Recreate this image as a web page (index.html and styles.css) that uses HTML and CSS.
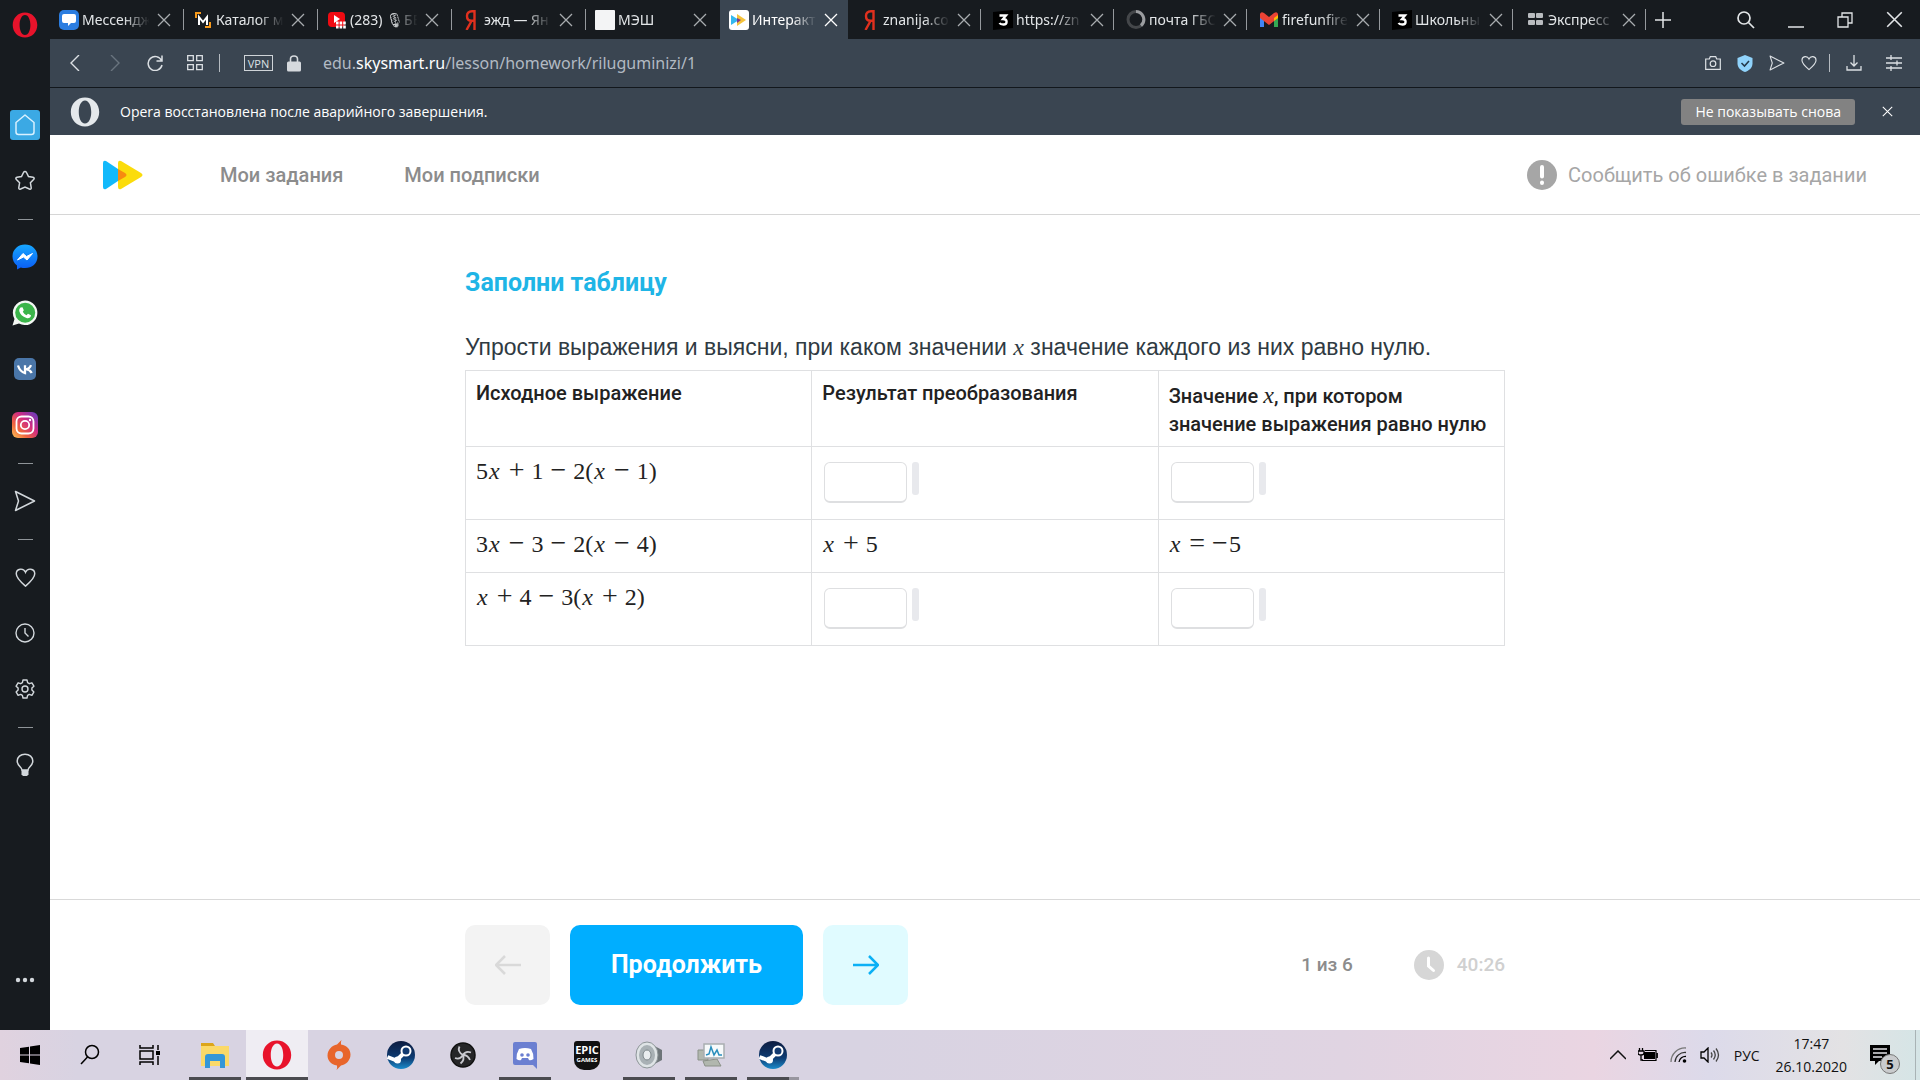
FILE: index.html
```html
<!DOCTYPE html>
<html lang="ru">
<head>
<meta charset="utf-8">
<title>Интерактивная тетрадь</title>
<link rel="stylesheet" href="styles.css">
</head>
<body>
<svg class="sprite" aria-hidden="true">
  <defs>
    <linearGradient id="g-red" x1="0" y1="0" x2="1" y2="1"><stop offset="0" stop-color="#ff2a45"/><stop offset="1" stop-color="#a5061c"/></linearGradient>
    <linearGradient id="g-msg" x1="0" y1="0" x2="0" y2="1"><stop offset="0" stop-color="#17a7ff"/><stop offset="1" stop-color="#0a5cf5"/></linearGradient>
    <linearGradient id="g-insta" x1="0" y1="1" x2="1" y2="0"><stop offset="0" stop-color="#fcc658"/><stop offset=".3" stop-color="#f0663f"/><stop offset=".6" stop-color="#cf2b83"/><stop offset="1" stop-color="#5b3fc4"/></linearGradient>
    <linearGradient id="g-steam" x1="0" y1="0" x2="0" y2="1"><stop offset="0" stop-color="#0d1c40"/><stop offset=".6" stop-color="#0d3b72"/><stop offset="1" stop-color="#1b8ccb"/></linearGradient>
    <symbol id="x" viewBox="0 0 14 14"><path d="M1 1l12 12M13 1L1 13" fill="none" stroke="currentColor" stroke-width="1.3"/></symbol>
    <symbol id="opera" viewBox="0 0 26 26"><path fill-rule="evenodd" d="M13 .5c7 0 12.300 5.500 12.300 12.500s-5.300 12.500-12.300 12.500S.7 20 .7 13 6 .5 13 .5zm0 2.500C9.500 3 7.600 8 7.600 13s1.900 10 5.400 10 5.400-5 5.400-10S16.500 3 13 3z" fill="currentColor"/></symbol>
    <symbol id="ya" viewBox="0 0 20 20"><path d="M13.500 0v20M13.500 1.200h-2.500C7.500 1.200 6 3.200 6 6s1.500 4.800 4.500 4.800h3M10.500 11L5.500 20" fill="none" stroke="#e0301e" stroke-width="2.400"/></symbol>
    <symbol id="sky" viewBox="0 0 40 30"><path d="M0 3Q0 0 3 1l12 8v12L3 29Q0 30 0 27z" fill="#12b9fb"/><path d="M15 3q0-3 3-2l20 12q3 2 0 4L18 29q-3 1-3-2z" fill="#fbdc0b"/><path d="M15 9l7 4q3 2 0 4l-7 4z" fill="#f78a10"/></symbol>
    <symbol id="heart" viewBox="0 0 20 20"><path d="M10 18.200C5 14 1.200 10.500 1.200 6.500c0-5.500 7-5.800 8.800-1.500 1.800-4.300 8.800-4 8.800 1.500 0 4-3.800 7.500-8.800 11.700z" fill="none" stroke="currentColor" stroke-width="1.400"/></symbol>
    <symbol id="send" viewBox="0 0 22 22"><path d="M1.500 1.500L20.500 11l-19 9.500 3-9.500z" fill="none" stroke="currentColor" stroke-width="1.500" stroke-linejoin="round"/></symbol>
    <symbol id="steam" viewBox="0 0 30 30"><circle cx="15" cy="15" r="14" fill="url(#g-steam)"/><path d="M1.500 17l9 3.500 8-8" stroke="#fff" stroke-width="4" fill="none"/><circle cx="20" cy="11" r="4.500" fill="#123a70" stroke="#fff" stroke-width="2"/><circle cx="11.500" cy="20" r="3.500" fill="#fff"/></symbol>
    <symbol id="lens" viewBox="0 0 22 22"><circle cx="13" cy="8" r="6.500" fill="none" stroke="currentColor" stroke-width="1.500"/><path d="M8.500 13L2 20" stroke="currentColor" stroke-width="1.500"/></symbol>
    <symbol id="three" viewBox="0 0 20 20"><path d="M0 2l20-2v18L0 20z" fill="#000"/><path d="M6.500 5.500h6.500L10 9c5 0 4.500 5.500.5 5.500-2 0-3.500-.7-4-1.500" fill="none" stroke="#fff" stroke-width="2.300"/></symbol>
  </defs>
</svg>
<div class="screen">
  <div class="browser">
    <aside class="sidebar">
      <a class="side-logo" href="#" aria-label="Opera"><svg width="26" height="26" class="red"><use href="#opera"/></svg></a>
      <a class="side-item home" href="#" aria-label="Домой"><svg width="30" height="30" viewBox="0 0 30 30"><path d="M6 12.500L15 5l9 7.500V22q0 2.500-2.500 2.500h-13Q6 24.500 6 22z" fill="none" stroke="#d9f1ff" stroke-width="1.500" stroke-linejoin="round"/></svg></a>
      <a class="side-item" href="#" aria-label="Закладки"><svg width="22" height="22" viewBox="0 0 22 22"><path d="M11 1.500q1 0 1.500 1l2 4 4.500.8q2 .5.600 2.200l-3.200 3.300.8 4.700q.2 2.200-1.800 1.500L11 17l-4.400 2q-2 .7-1.800-1.500l.8-4.700L2.400 9.500Q1 7.800 3 7.300l4.500-.8 2-4q.5-1 1.500-1z" fill="none" stroke="currentColor" stroke-width="1.500"/></svg></a>
      <hr>
      <a class="side-item" href="#" aria-label="Messenger"><svg width="26" height="26" viewBox="0 0 26 26"><path d="M13 .5C20 .5 25.500 5.500 25.500 12.500S20 24 13 24c-1.500 0-3-.2-4.200-.6L5 25.500v-4C2 19.500.5 16 .5 12.500.5 5.500 6 .5 13 .5z" fill="url(#g-msg)"/><path d="M5.500 16l5.500-6.500 3.500 3 6-3-5.500 6.500-3.500-3z" fill="#fff" stroke="#fff"/></svg></a>
      <a class="side-item" href="#" aria-label="WhatsApp"><svg width="26" height="26" viewBox="0 0 26 26"><path d="M13 .5a12.300 12.300 0 1 1-6 23L.5 25.500 2.500 19A12.300 12.300 0 0 1 13 .5z" fill="#f4f8f4"/><circle cx="13.200" cy="12.800" r="10" fill="#3bb54a"/><path d="M8.500 7.500l2-.3 1.300 3-1 1.500q1.200 2.300 3.700 3.500l1.500-1.500 3 1.500c0 2.500-2.500 3.500-4.500 2.800-4-1.200-6.500-4-7.300-7q-.3-2.200 1.300-3.500z" fill="#fff"/></svg></a>
      <a class="side-item" href="#" aria-label="ВКонтакте"><svg width="22" height="22" viewBox="0 0 22 22"><rect width="22" height="22" rx="5" fill="#4a76a8"/><path d="M4 7.500q2 6.500 7 7.500V7.200M11.500 11.500q4-.5 5.500-4.300M12 11.200q4 .5 5.700 3.800" stroke="#fff" stroke-width="2.300" fill="none"/></svg></a>
      <a class="side-item" href="#" aria-label="Instagram"><svg width="26" height="26" viewBox="0 0 26 26"><rect width="26" height="26" rx="6" fill="url(#g-insta)"/><rect x="4.500" y="4.500" width="17" height="17" rx="5" fill="none" stroke="#fff" stroke-width="1.800"/><circle cx="13" cy="13" r="4.200" fill="none" stroke="#fff" stroke-width="1.800"/><circle cx="18" cy="8" r="1.200" fill="#fff"/></svg></a>
      <hr>
      <a class="side-item" href="#" aria-label="Моя лента"><svg width="22" height="22"><use href="#send"/></svg></a>
      <hr>
      <a class="side-item" href="#" aria-label="Избранное"><svg width="21" height="21"><use href="#heart"/></svg></a>
      <a class="side-item" href="#" aria-label="История"><svg width="20" height="20" viewBox="0 0 20 20"><g fill="none" stroke="currentColor" stroke-width="1.400"><circle cx="10" cy="10" r="9"/><path d="M10 5v5l3.500 3.500"/></g></svg></a>
      <a class="side-item" href="#" aria-label="Настройки"><svg width="20" height="20" viewBox="0 0 20 20"><g fill="none" stroke="currentColor" stroke-width="1.400" stroke-linejoin="round"><path d="M8 1h4l.6 2.700 1.700 1 2.600-.9 2 3.400-2 1.900v1.900l2 1.900-2 3.400-2.600-.9-1.700 1L12 19H8l-.6-2.600-1.700-1-2.600.9-2-3.400 2-1.900V9.100l-2-1.900 2-3.400 2.600.9 1.700-1z"/><circle cx="10" cy="10" r="3"/></g></svg></a>
      <hr>
      <a class="side-item" href="#" aria-label="Подсказки"><svg width="18" height="24" viewBox="0 0 18 24"><path d="M6 17c0-3-4.800-4-4.800-9C1.200 4 4.500 1.200 9 1.200S16.800 4 16.800 8c0 5-4.800 6-4.800 9z" fill="none" stroke="currentColor" stroke-width="1.500"/><path d="M5.500 17h7v4.500L11 23H7l-1.500-1.500z" fill="currentColor"/></svg></a>
      <a class="side-item side-more" href="#" aria-label="Ещё"><svg width="20" height="6" viewBox="0 0 20 6" fill="currentColor"><circle cx="3" cy="3" r="2.200"/><circle cx="10" cy="3" r="2.200"/><circle cx="17" cy="3" r="2.200"/></svg></a>
    </aside>

    <div class="main">
      <nav class="tabs">
        <div class="tab"><svg viewBox="0 0 20 20"><rect width="20" height="20" rx="5" fill="#2b7de0"/><path d="M5 4h10q2 0 2 2v5q0 2-2 2h-3l-3 3v-3H5q-2 0-2-2V6q0-2 2-2z" fill="#fff"/></svg><span>Мессендж</span><button aria-label="Закрыть"><svg><use href="#x"/></svg></button></div>
        <div class="tab"><svg viewBox="0 0 20 20"><path d="M3 8V3h5M17 12v5h-5" fill="none" stroke="#f79a1c" stroke-width="2"/><path d="M6 15V7l4 5 4-5v8" fill="none" stroke="#fff" stroke-width="2"/></svg><span>Каталог м</span><button aria-label="Закрыть"><svg><use href="#x"/></svg></button></div>
        <div class="tab"><svg viewBox="0 0 20 20"><rect x="1" y="2" width="17" height="15" rx="4" fill="#f00b12"/><path d="M7 5l6 4-6 4z" fill="#fff"/><path d="M9 13h10M9 17h10" stroke="#fff" stroke-width="3" stroke-dasharray="2.600 1"/></svg><span>(283) 🎙БЕ</span><button aria-label="Закрыть"><svg><use href="#x"/></svg></button></div>
        <div class="tab"><svg><use href="#ya"/></svg><span>эжд — Ян</span><button aria-label="Закрыть"><svg><use href="#x"/></svg></button></div>
        <div class="tab"><svg viewBox="0 0 20 20"><rect width="20" height="20" rx="1" fill="#f3f4f5"/></svg><span>МЭШ</span><button aria-label="Закрыть"><svg><use href="#x"/></svg></button></div>
        <div class="tab active"><svg viewBox="0 0 20 20"><rect width="20" height="20" rx="3" fill="#fff"/><path d="M2 5l8 5-8 5z" fill="#35b8ee"/><path d="M8 4l9 6-9 6z" fill="#f5c33b"/><path d="M8 8l4 2-4 3z" fill="#7b3c90"/></svg><span>Интеракт</span><button aria-label="Закрыть"><svg><use href="#x"/></svg></button></div>
        <div class="tab"><svg><use href="#ya"/></svg><span>znanija.co</span><button aria-label="Закрыть"><svg><use href="#x"/></svg></button></div>
        <div class="tab"><svg><use href="#three"/></svg><span>https://zn</span><button aria-label="Закрыть"><svg><use href="#x"/></svg></button></div>
        <div class="tab"><svg viewBox="0 0 20 20"><circle cx="10" cy="9.500" r="8" fill="none" stroke="#44474a" stroke-width="3"/><path d="M10 1.500a8 8 0 0 1 5 14" fill="none" stroke="#9b9da0" stroke-width="3"/></svg><span>почта ГБО</span><button aria-label="Закрыть"><svg><use href="#x"/></svg></button></div>
        <div class="tab"><svg viewBox="0 0 20 20"><path d="M1 17V5l4 3v9z" fill="#4285f4"/><path d="M19 17V5l-4 3v9z" fill="#34a853"/><path d="M1 8V4q1-3 4-1l5 4 5-4q3-2 4 1v4l-9 7z" fill="#ea4335"/><path d="M15 8l4-3v3l-4 3z" fill="#fbbc04"/></svg><span>firefunfire</span><button aria-label="Закрыть"><svg><use href="#x"/></svg></button></div>
        <div class="tab"><svg><use href="#three"/></svg><span>Школьны</span><button aria-label="Закрыть"><svg><use href="#x"/></svg></button></div>
        <div class="tab"><svg viewBox="0 0 20 20" fill="#b9bcbf"><rect x="3" y="3" width="7" height="5" rx="1"/><rect x="11" y="3" width="7" height="5" rx="1"/><rect x="3" y="10" width="7" height="5" rx="1"/><rect x="11" y="10" width="7" height="5" rx="1"/></svg><span>Экспресс</span><button aria-label="Закрыть"><svg><use href="#x"/></svg></button></div>
        <button class="new-tab" aria-label="Новая вкладка"><svg width="16" height="16" viewBox="0 0 16 16"><path d="M8 0v16M0 8h16" stroke="currentColor" stroke-width="1.500"/></svg></button>
        <div class="window-controls">
          <button aria-label="Поиск"><svg width="18" height="18" viewBox="0 0 18 18"><g fill="none" stroke="currentColor" stroke-width="1.700"><circle cx="7" cy="7" r="6"/><path d="M11.500 11.500L17 17"/></g></svg></button>
          <button aria-label="Свернуть"><svg width="16" height="16" viewBox="0 0 16 16"><path d="M0 15h16" stroke="currentColor" stroke-width="1.500"/></svg></button>
          <button aria-label="Развернуть"><svg width="16" height="16" viewBox="0 0 16 16"><path d="M1 5h10v10H1zM5 5V1h10v10h-4" fill="none" stroke="currentColor" stroke-width="1.300"/></svg></button>
          <button aria-label="Закрыть окно"><svg width="17" height="17"><use href="#x"/></svg></button>
        </div>
      </nav>

      <div class="address">
        <button aria-label="Назад"><svg width="16" height="16" viewBox="0 0 16 16"><path d="M12 0L4 8l8 8" fill="none" stroke="currentColor" stroke-width="1.400"/></svg></button>
        <button class="dim" aria-label="Вперёд"><svg width="16" height="16" viewBox="0 0 16 16"><path d="M4 0l8 8-8 8" fill="none" stroke="currentColor" stroke-width="1.400"/></svg></button>
        <button aria-label="Обновить"><svg width="16" height="16" viewBox="0 0 16 16"><path d="M14.500 5.500A7 7 0 1 0 15 10M15 .5v5.500h-5.500" fill="none" stroke="currentColor" stroke-width="1.500"/></svg></button>
        <button aria-label="Экспресс-панель"><svg width="16" height="16" viewBox="0 0 16 16"><path d="M.7.7h5.600v5H.7zM9.700.7h5.600v5H9.700zM.7 9.700h5.600v5H.7zM9.700 9.700h5.600v5H9.700z" fill="none" stroke="currentColor" stroke-width="1.300"/></svg></button>
        <i class="bar"></i>
        <button class="vpn">VPN</button>
        <svg class="lock" width="14" height="17" viewBox="0 0 14 17"><rect y="6.500" width="14" height="10" rx="1.500" fill="#d5d9dd"/><path d="M3.500 7V4q0-3 3.500-3t3.500 3v3" fill="none" stroke="#d5d9dd" stroke-width="1.600"/></svg>
        <a class="url" href="#">edu.<b>skysmart.ru</b>/lesson/homework/riluguminizi/1</a>
        <div class="address-tools">
          <button aria-label="Снимок"><svg width="16" height="16" viewBox="0 0 16 16"><path d="M.7 4h3.600l1-2.300h5.400l1 2.300h3.600v10.300H.7z" fill="none" stroke="currentColor" stroke-width="1.200"/><circle cx="8" cy="8.700" r="2.800" fill="none" stroke="currentColor" stroke-width="1.200"/></svg></button>
          <button aria-label="Защита"><svg width="16" height="17" viewBox="0 0 16 17"><path d="M8 0l7.500 3v5.500C15.500 13 12 15.500 8 17 4 15.500.5 13 .5 8.500V3z" fill="#90d3fb"/><path d="M4.500 8l3 3 4.500-5" fill="none" stroke="#243a4c" stroke-width="1.600"/></svg></button>
          <button aria-label="Отправить"><svg width="16" height="16"><use href="#send"/></svg></button>
          <button aria-label="В избранное"><svg width="16" height="16"><use href="#heart"/></svg></button>
          <i class="bar"></i>
          <button aria-label="Загрузки"><svg width="16" height="16" viewBox="0 0 16 16"><path d="M1 11v4h14v-4M8 0v11M4.500 7.500L8 11l3.500-3.500" fill="none" stroke="currentColor" stroke-width="1.300"/></svg></button>
          <button class="setup" aria-label="Настройка"><svg width="16" height="16" viewBox="0 0 16 16"><path d="M0 3h16M0 8h16M0 13h16M5 0v5M11 5.500v5M5 11v5" fill="none" stroke="currentColor" stroke-width="1.300"/></svg></button>
        </div>
      </div>

      <div class="notice">
        <svg width="30" height="30" class="white"><use href="#opera"/></svg>
        <span>Opera восстановлена после аварийного завершения.</span>
        <button class="dismiss">Не показывать снова</button>
        <button class="notice-close" aria-label="Закрыть"><svg width="11" height="11"><use href="#x"/></svg></button>
      </div>

      <header class="site-header">
        <a class="logo" href="#" aria-label="Skysmart"><svg width="40" height="30"><use href="#sky"/></svg></a>
        <a href="#">Мои задания</a>
        <a href="#">Мои подписки</a>
        <a class="report" href="#"><svg width="30" height="30" viewBox="0 0 30 30"><circle cx="15" cy="15" r="15" fill="#a6a6a6"/><path d="M15 7v9.500M15 22.500v.5" stroke="#fff" stroke-width="4" stroke-linecap="round"/></svg>Сообщить об ошибке в задании</a>
      </header>

      <main class="content">
        <div class="column">
          <h1>Заполни таблицу</h1>
          <p>Упрости выражения и выясни, при каком значении <i class="var">x</i> значение каждого из них равно нулю.</p>
          <table>
            <thead><tr><th>Исходное выражение</th><th>Результат преобразования</th><th class="tall">Значение <i class="var">x</i>, при котором<br>значение выражения равно нулю</th></tr></thead>
            <tbody>
              <tr class="entry">
                <td class="math">5<i>x</i><span>+</span>1<span>−</span>2(<i>x</i><span>−</span>1)</td>
                <td><div class="answer"><input type="text" aria-label="Результат, строка 1"><i></i></div></td>
                <td><div class="answer"><input type="text" aria-label="Значение x, строка 1"><i></i></div></td>
              </tr>
              <tr>
                <td class="math">3<i>x</i><span>−</span>3<span>−</span>2(<i>x</i><span>−</span>4)</td>
                <td class="math"><i>x</i><span>+</span>5</td>
                <td class="math"><i>x</i><span>=</span><span class="neg">−</span>5</td>
              </tr>
              <tr class="entry">
                <td class="math"><i>x</i><span>+</span>4<span>−</span>3(<i>x</i><span>+</span>2)</td>
                <td><div class="answer"><input type="text" aria-label="Результат, строка 3"><i></i></div></td>
                <td><div class="answer"><input type="text" aria-label="Значение x, строка 3"><i></i></div></td>
              </tr>
            </tbody>
          </table>
        </div>
      </main>

      <footer class="site-footer">
        <div class="column">
          <button class="step prev" aria-label="Назад" disabled><svg width="26" height="20" viewBox="0 0 26 20"><path d="M26 10H2M10 1l-9 9 9 9" fill="none" stroke="currentColor" stroke-width="2.500"/></svg></button>
          <button class="continue">Продолжить</button>
          <button class="step next" aria-label="Вперёд"><svg width="26" height="20" viewBox="0 0 26 20"><path d="M0 10h24M16 1l9 9-9 9" fill="none" stroke="currentColor" stroke-width="2.500"/></svg></button>
          <span class="count">1 из 6</span>
          <span class="timer"><svg width="30" height="30" viewBox="0 0 30 30"><circle cx="15" cy="15" r="15" fill="#d6d6d6"/><path d="M14.500 8v8l5 4.500" fill="none" stroke="#fff" stroke-width="3" stroke-linecap="round"/></svg>40:26</span>
        </div>
      </footer>
    </div>
  </div>

  <div class="taskbar">
    <button class="sys" aria-label="Пуск"><svg width="20" height="20" viewBox="0 0 20 20"><path d="M0 3l9-1.300V9.500H0zM10 1.500L20 0v9.500H10zM0 10.500h9v7.800L0 17zM10 10.500h10V20l-10-1.500z"/></svg></button>
    <button class="sys" aria-label="Поиск"><svg width="22" height="22"><use href="#lens"/></svg></button>
    <button class="sys" aria-label="Представление задач"><svg width="22" height="20" viewBox="0 0 22 20"><path d="M1 0v3h13V0M1 20v-3h13v3M1 6h13v8H1zM19 0v5M19 11v9" fill="none" stroke="#000" stroke-width="1.500"/><rect x="17" y="6" width="4" height="4"/></svg></button>
    <button class="app run" aria-label="Проводник"><svg width="30" height="26" viewBox="0 0 30 26"><path d="M1 1h12l2 3h-14z" fill="#dca51a"/><path d="M1 4h28v20H1z" fill="#fbd968"/><path d="M5 26V15q0-3 3-3h14q3 0 3 3v11h-5v-7H10v7z" fill="#3597d8"/></svg></button>
    <button class="app run current" aria-label="Opera"><svg width="30" height="30" class="red"><use href="#opera"/></svg></button>
    <button class="app" aria-label="Origin"><svg width="24" height="30" viewBox="0 0 24 30"><path fill-rule="evenodd" d="M10 4.500L14.500 0q-1 2.500-.5 4.500c6 .8 9.500 5 9.500 10 0 6-4.500 10-9.500 11L9.500 30q1-2.500.5-4.500C4 24.500.5 20.500.5 15.500c0-6 4.500-10 9.500-11zM12 11a4 4 0 1 0 0 8 4 4 0 1 0 0-8z" fill="#e8652b"/></svg></button>
    <button class="app" aria-label="Steam"><svg width="30" height="30"><use href="#steam"/></svg></button>
    <button class="app" aria-label="OBS"><svg width="28" height="28" viewBox="0 0 28 28"><circle cx="14" cy="14" r="12" fill="#262628" stroke="#111" stroke-width="1.500"/><path d="M10.500 5.500q-2.500 5 3.500 8.500M22 11.500q-5.500-2-8 2.500 2 5-2.500 8.500M21 19q-2-5-7-5M6 17q5 2 8-3" fill="none" stroke="#c9c9cf" stroke-width="1.800"/></svg></button>
    <button class="app run" aria-label="Discord"><svg width="26" height="28" viewBox="0 0 26 28"><path d="M3 1h20q2 0 2 2v25l-4-4H3q-2 0-2-2V3q0-2 2-2z" fill="#6b7fd1"/><path d="M7 8q6-2 12 0 3 5 2.500 10-3 2-4.500 1l-1-2h-6l-1 2q-2 1-4.500-1Q4 13 7 8z" fill="#fff"/><circle cx="10" cy="14" r="1.800" fill="#6b7fd1"/><circle cx="16" cy="14" r="1.800" fill="#6b7fd1"/></svg></button>
    <button class="app" aria-label="Epic Games"><span class="epic">EPIC<small>GAMES</small></span></button>
    <button class="app run" aria-label="Звук"><svg width="28" height="28" viewBox="0 0 28 28"><path d="M14 2l13 7v10l-13 7z" fill="#6e7579"/><ellipse cx="12" cy="14" rx="11" ry="13" fill="#dfe4e6" stroke="#8d9598"/><ellipse cx="12" cy="14" rx="8" ry="10" fill="#a9b1b5"/><ellipse cx="12" cy="14" rx="4" ry="5" fill="#e9edef" stroke="#7e878b"/></svg></button>
    <button class="app run" aria-label="Монитор ресурсов"><svg width="28" height="26" viewBox="0 0 28 26"><path d="M1 8h10v10H1zM6 19l14-2 4 7H8z" fill="#b1b7ae" stroke="#8b9188"/><path d="M7 2h20v14H7z" fill="#f7fafb" stroke="#a9afb1" stroke-width="1.500"/><path d="M9 13l3-1 2-7 3 8 3-5 2 5h3" fill="none" stroke="#2a8fbd" stroke-width="1.500"/></svg></button>
    <button class="app run stacked" aria-label="Steam"><svg width="30" height="30"><use href="#steam"/></svg></button>
    <div class="tray">
      <svg width="16" height="10" viewBox="0 0 16 10"><path d="M0 9l8-8 8 8" fill="none" stroke="#111" stroke-width="1.500"/></svg>
      <svg width="20" height="14" viewBox="0 0 20 14"><path d="M0 3h6v2q0 2-3 2t-3-2zM1.500 0v3M4.500 0v3M3 7v5h2" fill="none" stroke="#000" stroke-width="1.300"/><rect x="6" y="4" width="11" height="7"/><path d="M7 2.500h11v10H4M19.300 5v5" fill="none" stroke="#000" stroke-width="1.200"/></svg>
      <svg width="18" height="16" viewBox="0 0 18 16"><g fill="none" stroke="#777" stroke-width="1.300"><path d="M1 15A14 14 0 0 1 16 1"/><path d="M5 15A10 10 0 0 1 16 5.500" stroke="#333"/><path d="M9 15a6.500 6.500 0 0 1 7-5.500" stroke="#000"/></g><circle cx="14.500" cy="14" r="1.800"/></svg>
      <svg width="20" height="16" viewBox="0 0 20 16"><path d="M1 5h3l4-4v14l-4-4H1z" fill="none" stroke="#000" stroke-width="1.300"/><path d="M11 5.500q2 2.500 0 5M13.500 3.500q3.500 4.500 0 9M16 1.500q5 6.500 0 13" fill="none" stroke="#444" stroke-width="1.300"/></svg>
      <span class="lang">РУС</span>
      <time class="clock">17:47<br>26.10.2020</time>
      <span class="messages"><svg width="20" height="20" viewBox="0 0 20 20"><path d="M0 0h20v16H9l-4 4v-4H0z"/><path d="M3 4h14M3 8h14M3 12h9" stroke="#e2e2e6" stroke-width="1.500"/></svg><b>5</b></span>
    </div>
  </div>
</div>
</body>
</html>
```
FILE: styles.css
```css
* { box-sizing: border-box; }
body { margin: 0; font-family: "Open Sans", "Noto Sans", sans-serif; background: #fff; }
button { padding: 0; border: 0; background: none; color: inherit; font: inherit; display: flex; align-items: center; justify-content: center; }
a { color: inherit; text-decoration: none; }
svg { display: block; flex: none; }
.sprite { position: absolute; width: 0; height: 0; }
.red { color: #e8132b; }
.white { color: #e4e8eb; }

.screen { display: flex; flex-direction: column; min-height: 100vh; }
.browser { flex: 1; display: flex; }
.main { flex: 1; min-width: 0; display: flex; flex-direction: column; }

/* Opera sidebar */
.sidebar { width: 50px; flex: none; background: #171b1f; color: #d3d8dc; display: flex; flex-direction: column; align-items: center; padding-bottom: 22px; }
.side-logo { height: 97px; padding-top: 12px; }
.side-item { height: 56px; display: flex; align-items: center; }
.home svg { background: #3ba9e4; border-radius: 3px; }
.sidebar hr { width: 15px; height: 1px; margin: 10px 0 9px; border: 0; background: #8f9498; }
.side-more { margin-top: auto; }

/* Tab strip */
.tabs { height: 39px; background: #171b1f; color: #e3e6e8; display: flex; }
.tab { flex: 0 1 134px; min-width: 0; display: flex; align-items: center; padding: 0 13px 0 9px; gap: 3px; position: relative; font: 14px "Noto Sans", sans-serif; }
.tab > svg { width: 20px; height: 20px; }
.tab span { flex: 1; min-width: 0; overflow: hidden; white-space: nowrap; mask-image: linear-gradient(90deg, #000 60%, transparent 98%); }
.tab button svg { width: 14px; height: 14px; color: #a8acaf; }
.tab button { margin-left: 3px; }
.tab::after { content: ""; position: absolute; right: 0; top: 9px; height: 21px; width: 1px; background: #95999d; }
.tab.active { flex-basis: 128px; padding-right: 10px; background: #3a4551; color: #fff; }
.active ~ .tab { flex-basis: 133px; padding: 0 10px 0 12px; }
.tab.active button svg { color: #fff; }
.tab.active::after, .tab:has(+ .active)::after { display: none; }
.new-tab { margin-left: 9px; }
.window-controls { margin-left: auto; display: flex; align-items: center; gap: 33px; padding-right: 17px; }

/* Address bar */
.address { height: 49px; background: #3a4551; border-bottom: 1px solid #12171c; color: #dce0e4; display: flex; align-items: center; padding: 0 18px 0 17px; }
.address > button { width: 16px; margin-right: 24px; }
.address .dim { color: #69747e; }
.bar { width: 1px; height: 18px; background: #b5bbc1; flex: none; margin-left: -8px; }
.address > .vpn { width: 29px; height: 16px; border: 1px solid #cfd4d8; font-size: 11px; margin: 0 14px 0 24px; }
.url { margin-left: 22px; font: 16px/22px "Noto Sans", sans-serif; color: #b2bac3; }
.url b { font-weight: 400; color: #fff; }
.address-tools { margin-left: auto; display: flex; align-items: center; gap: 16px; }
.address-tools .bar { margin: 0 0 0 -4px; }
.address-tools .setup { margin-left: 8px; }

/* Crash recovery notice */
.notice { height: 47px; background: #3a4551; color: #fff; display: flex; align-items: center; gap: 20px; padding: 0 27px 0 20px; font-size: 14px; }
.dismiss { margin-left: auto; height: 26px; padding: 0 14px; border-radius: 3px; background: #828282; white-space: nowrap; }
.notice-close { margin-left: 7px; }

/* Site */
.site-header { height: 80px; border-bottom: 1px solid #d6d6d6; display: flex; align-items: center; padding: 0 53px 0 53px; font: 500 20px/28px Roboto, sans-serif; color: #8c8c8c; gap: 61px; }
.logo { margin-right: 16px; }
.report { margin-left: auto; display: flex; align-items: center; gap: 11px; font-weight: 400; color: #a6a6a6; }
.content { flex: 1; }
.column { width: 100%; max-width: 1040px; margin: 0 auto; }
h1 { margin: 0; padding: 52px 0 28px; font: 700 25px/32px Roboto, sans-serif; color: #1fb5e6; }
p { margin: 0; padding-bottom: 3px; font: 23px/40px "Liberation Sans", Arial, sans-serif; color: #2f3a42; }
table { width: 100%; border-collapse: collapse; table-layout: fixed; }
th, td { border: 1px solid #dfe0e2; padding: 0 10px; text-align: left; vertical-align: top; }
th { height: 76px; padding-top: 8px; font: 500 20px/28px Roboto, sans-serif; color: #222; }
th.tall { padding-top: 11px; padding-right: 0; }
td { height: 53px; padding-top: 10px; }
.entry td { height: 73px; }
.math { font: 24px/28px "Liberation Serif", "Times New Roman", serif; color: #222; }
.math i { margin: 0 2px 0 1px; }
.math span { margin: 0 7px; font-size: 28px; line-height: 0; }
.math .neg { margin: 0 1px 0 0; }
.var { font: italic 24px/0 "Liberation Serif", "Times New Roman", serif; }
.answer { display: flex; gap: 5px; padding: 5px 0 0 2px; }
.answer input { width: 83px; height: 41px; border: 1px solid #dedfe1; border-bottom-width: 2px; border-radius: 6px; background: #fff; padding: 0 8px; font: inherit; }
.answer i { width: 7px; height: 33px; border-radius: 3px; background: #e8e9ed; }

.site-footer { border-top: 1px solid #d9d9d9; padding: 25px 0; color: #8c8c8c; font: 500 20px/28px Roboto, sans-serif; }
.site-footer .column { display: flex; align-items: center; }
.step { width: 85px; height: 80px; border-radius: 10px; }
.prev { background: #f3f3f3; color: #d9d9d9; }
.next { background: #e0fbff; color: #0bb0f5; }
.continue { width: 233px; height: 80px; margin: 0 20px; border-radius: 10px; background: #00aeff; color: #fff; font-size: 25px; font-weight: 700; }
.count { margin-left: auto; font-size: 19px; }
.timer { display: flex; align-items: center; gap: 13px; margin-left: 61px; color: #d0d0d0; font-size: 19px; }

/* Windows taskbar */
.taskbar { height: 50px; display: flex; background: linear-gradient(90deg, #e0d2df 0, #d8d3e2 4%, #d8d3e2 45%, #e0d4e2 70%, #ead5e2 83%, #dcdaea 89%, #e3e2e4 96%, #d5e5e6 100%); }
.sys { width: 60px; }
.app { width: 62px; position: relative; }
.app:nth-of-type(4) { margin-left: 4px; }
.run::after { content: ""; position: absolute; left: 5px; right: 5px; bottom: 0; height: 3px; background: #4b4b50; }
.current { background: #efedf3; }
.current::after { left: 0; right: 0; }
.stacked::after { background: linear-gradient(90deg, #4b4b50 80%, #98969f 80%); }
.epic { width: 26px; height: 29px; background: #111; color: #fff; font: 700 11px/12px "Open Sans", sans-serif; padding-top: 3px; border-radius: 3px 3px 10px 10px; }
.epic small { display: block; font-size: 6px; line-height: 8px; }
.tray { margin-left: auto; display: flex; align-items: center; gap: 12px; padding-right: 19px; color: #111; font-size: 14px; border-right: 1px solid #a9b3b5; margin-right: 4px; }
.lang { margin-left: 2px; }
.clock { line-height: 23px; text-align: center; margin: 0 11px 0 4px; font-size: 14px; }
.messages { position: relative; width: 26px; }
.messages b { position: absolute; left: 10px; top: 9px; width: 20px; height: 20px; border: 1px solid #777; border-radius: 50%; background: #c9cbcd; font-size: 13px; line-height: 18px; text-align: center; }
```
